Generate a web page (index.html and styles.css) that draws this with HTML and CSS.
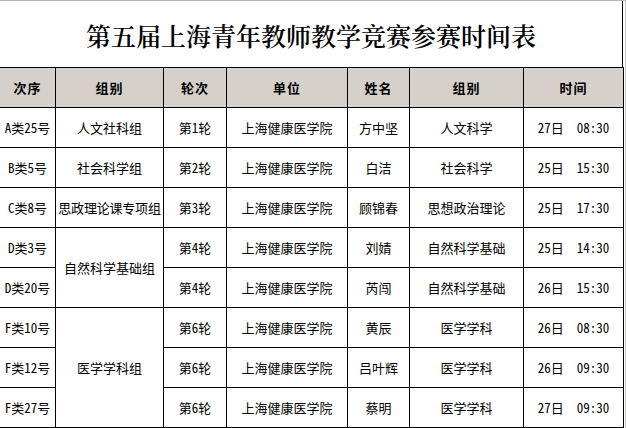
FILE: index.html
```html
<!DOCTYPE html>
<html lang="zh-CN">
<head>
<meta charset="utf-8">
<title>第五届上海青年教师教学竞赛参赛时间表</title>
<link rel="stylesheet" href="styles.css">
</head>
<body>
<div class="sheet">
  <div class="title">第五届上海青年教师教学竞赛参赛时间表</div>
  <table class="grid">
    <colgroup>
      <col class="c1"><col class="c2"><col class="c3"><col class="c4"><col class="c5"><col class="c6"><col class="c7">
    </colgroup>
    <thead>
      <tr class="head">
        <th>次序</th><th>组别</th><th>轮次</th><th>单位</th><th>姓名</th><th>组别</th><th>时间</th>
      </tr>
    </thead>
    <tbody>
      <tr><td>A类25号</td><td>人文社科组</td><td>第1轮</td><td>上海健康医学院</td><td>方中坚</td><td>人文科学</td><td class="time">27日&nbsp;&nbsp;08:30</td></tr>
      <tr><td>B类5号</td><td>社会科学组</td><td>第2轮</td><td>上海健康医学院</td><td>白洁</td><td>社会科学</td><td class="time">25日&nbsp;&nbsp;15:30</td></tr>
      <tr><td>C类8号</td><td class="tight">思政理论课专项组</td><td>第3轮</td><td>上海健康医学院</td><td>顾锦春</td><td>思想政治理论</td><td class="time">25日&nbsp;&nbsp;17:30</td></tr>
      <tr><td>D类3号</td><td rowspan="2">自然科学基础组</td><td>第4轮</td><td>上海健康医学院</td><td>刘婧</td><td>自然科学基础</td><td class="time">25日&nbsp;&nbsp;14:30</td></tr>
      <tr><td>D类20号</td><td>第4轮</td><td>上海健康医学院</td><td>芮闯</td><td>自然科学基础</td><td class="time">26日&nbsp;&nbsp;15:30</td></tr>
      <tr><td>F类10号</td><td rowspan="3">医学学科组</td><td>第6轮</td><td>上海健康医学院</td><td>黄辰</td><td>医学学科</td><td class="time">26日&nbsp;&nbsp;08:30</td></tr>
      <tr><td>F类12号</td><td>第6轮</td><td>上海健康医学院</td><td>吕叶辉</td><td>医学学科</td><td class="time">26日&nbsp;&nbsp;09:30</td></tr>
      <tr><td>F类27号</td><td>第6轮</td><td>上海健康医学院</td><td>蔡明</td><td>医学学科</td><td class="time">27日&nbsp;&nbsp;09:30</td></tr>
    </tbody>
  </table>
</div>
</body>
</html>
```
FILE: styles.css
```css
html, body {
  margin: 0;
  padding: 0;
  background: #ffffff;
}
body {
  width: 626px;
  height: 428px;
  overflow: hidden;
  font-family: "Noto Sans Mono CJK SC", "Noto Sans CJK SC", monospace;
  color: #000;
}
.sheet {
  width: 625px;
  border-top: 1px solid #b4b4b4;
  border-right: 1px solid #c8c8c8;
}
.title {
  width: 623px;
  height: 66px;
  box-sizing: border-box;
  border-right: 1px solid #000;
  display: flex;
  align-items: center;
  justify-content: center;
  font-family: "Noto Serif CJK SC", "Noto Sans CJK SC", serif;
  font-size: 25px;
  font-weight: 600;
  padding-top: 2px;
}
.grid {
  border-collapse: collapse;
  table-layout: fixed;
  width: 624px;
  margin-left: -1px;
}
.c1 { width: 56px; }
.c2 { width: 108px; }
.c3 { width: 63px; }
.c4 { width: 121px; }
.c5 { width: 62px; }
.c6 { width: 114px; }
.c7 { width: 100px; }
.grid th, .grid td {
  border: 1px solid #000;
  padding: 0;
  text-align: center;
  vertical-align: middle;
  font-size: 13px;
  line-height: 16px;
  white-space: nowrap;
  overflow: hidden;
}
.grid tr {
  height: 40px;
}
.head th {
  background: #d5d1ca;
  font-family: "Noto Sans CJK SC", sans-serif;
  font-weight: 700;
  letter-spacing: 1px;
}
.grid td.tight {
  letter-spacing: -0.2px;
}
```
